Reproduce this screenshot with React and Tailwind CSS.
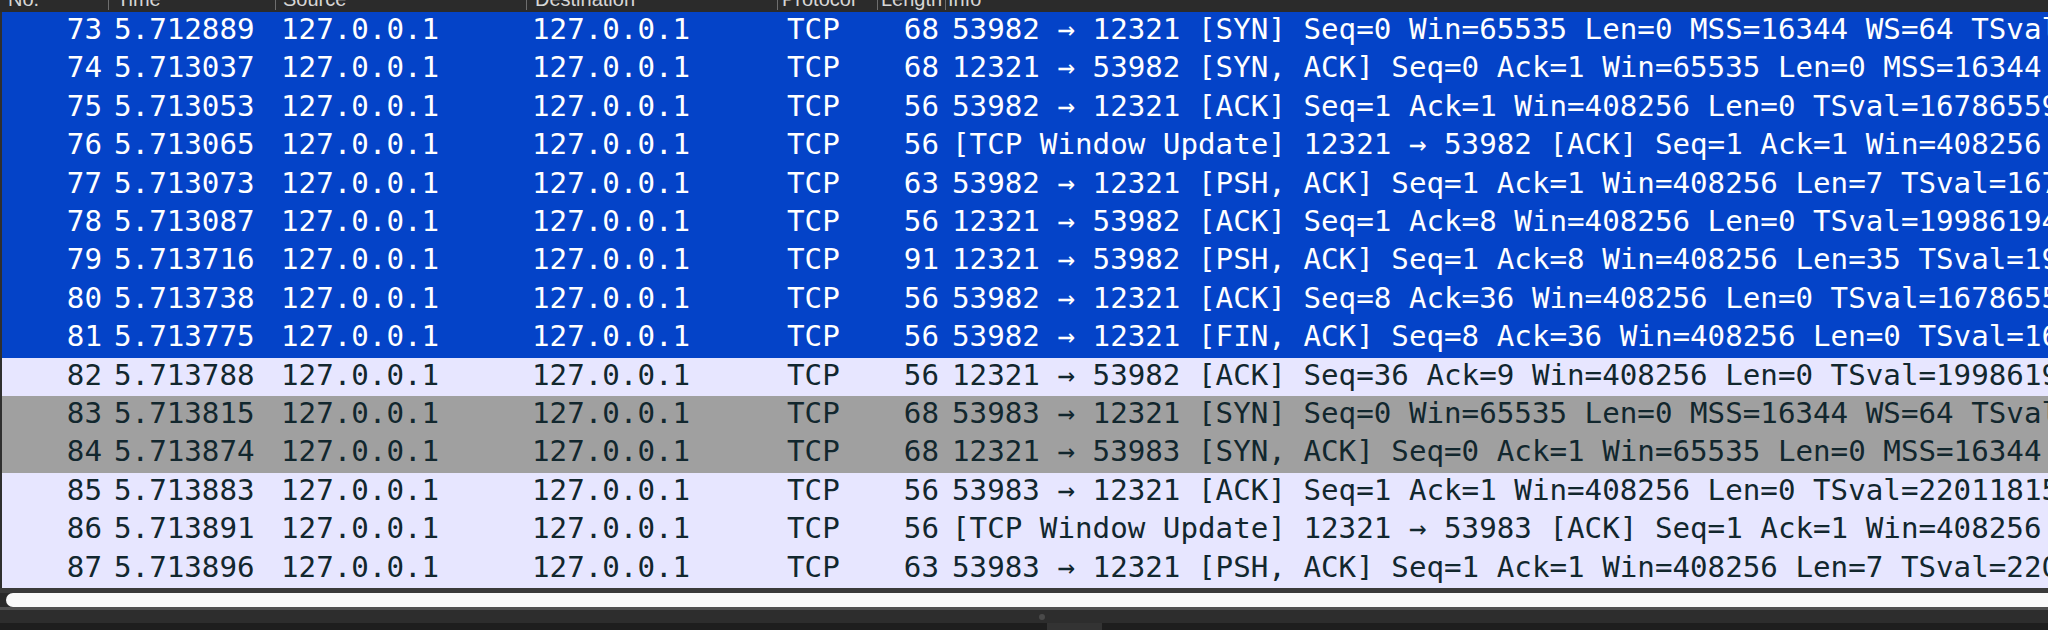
import React from "react";

const cols = [
  { key: "no", label: "No.", head: "pl-[6px]", cell: "justify-end pr-[6px]" },
  { key: "time", label: "Time", head: "pl-[8px]", cell: "pl-[6px]" },
  { key: "src", label: "Source", head: "pl-[7px]", cell: "pl-[6px]" },
  { key: "dst", label: "Destination", head: "pl-[8px]", cell: "pl-[6px]" },
  { key: "proto", label: "Protocol", head: "pl-[4px]", cell: "pl-[10px]" },
  { key: "len", label: "Length", head: "pl-[3px]", cell: "justify-end pr-[6px]" },
  { key: "info", label: "Info", head: "pl-[2px]", cell: "pl-[7px]" },
];

const packets = [
  [73, "5.712889", 68, "53982 → 12321 [SYN] Seq=0 Win=65535 Len=0 MSS=16344 WS=64 TSval=1678655904 TSecr=0 SACK_PERM", "sel"],
  [74, "5.713037", 68, "12321 → 53982 [SYN, ACK] Seq=0 Ack=1 Win=65535 Len=0 MSS=16344 WS=64 TSval=1998619420", "sel"],
  [75, "5.713053", 56, "53982 → 12321 [ACK] Seq=1 Ack=1 Win=408256 Len=0 TSval=1678655904 TSecr=1998619420", "sel"],
  [76, "5.713065", 56, "[TCP Window Update] 12321 → 53982 [ACK] Seq=1 Ack=1 Win=408256 Len=0 TSval=1998619420", "sel"],
  [77, "5.713073", 63, "53982 → 12321 [PSH, ACK] Seq=1 Ack=1 Win=408256 Len=7 TSval=1678655904 TSecr=1998619420", "sel"],
  [78, "5.713087", 56, "12321 → 53982 [ACK] Seq=1 Ack=8 Win=408256 Len=0 TSval=1998619420 TSecr=1678655904", "sel"],
  [79, "5.713716", 91, "12321 → 53982 [PSH, ACK] Seq=1 Ack=8 Win=408256 Len=35 TSval=1998619421 TSecr=1678655904", "sel"],
  [80, "5.713738", 56, "53982 → 12321 [ACK] Seq=8 Ack=36 Win=408256 Len=0 TSval=1678655905 TSecr=1998619421", "sel"],
  [81, "5.713775", 56, "53982 → 12321 [FIN, ACK] Seq=8 Ack=36 Win=408256 Len=0 TSval=1678655905 TSecr=1998619421", "sel"],
  [82, "5.713788", 56, "12321 → 53982 [ACK] Seq=36 Ack=9 Win=408256 Len=0 TSval=1998619421 TSecr=1678655905", "tcp"],
  [83, "5.713815", 68, "53983 → 12321 [SYN] Seq=0 Win=65535 Len=0 MSS=16344 WS=64 TSval=2201181530 TSecr=0", "syn"],
  [84, "5.713874", 68, "12321 → 53983 [SYN, ACK] Seq=0 Ack=1 Win=65535 Len=0 MSS=16344 WS=64 TSval=3110241806", "syn"],
  [85, "5.713883", 56, "53983 → 12321 [ACK] Seq=1 Ack=1 Win=408256 Len=0 TSval=2201181530 TSecr=3110241806", "tcp"],
  [86, "5.713891", 56, "[TCP Window Update] 12321 → 53983 [ACK] Seq=1 Ack=1 Win=408256 Len=0 TSval=3110241806", "tcp"],
  [87, "5.713896", 63, "53983 → 12321 [PSH, ACK] Seq=1 Ack=1 Win=408256 Len=7 TSval=2201181530 TSecr=3110241806", "tcp"],
];

const rowStyle = {
  sel: "bg-[#0443c8] text-white",
  tcp: "bg-[#e7e6ff] text-[#12272e]",
  syn: "bg-[#a0a0a0] text-[#12272e]",
};

const grid = "grid grid-cols-[106px_167px_251px_251px_100px_68px_1fr]";

const PacketRow = ({ p }) => {
  const [no, time, len, info, kind] = p;
  const values = [no, time, "127.0.0.1", "127.0.0.1", "TCP", len, info];
  return (
    <div className={`${grid} h-[38.42px] ${rowStyle[kind]}`}>
      {values.map((v, i) => (
        <div
          key={cols[i].key}
          className={`flex items-start overflow-hidden whitespace-pre leading-[35px] ${cols[i].cell}`}
        >
          {v}
        </div>
      ))}
    </div>
  );
};

export default function App() {
  return (
    <div className="w-[2048px] h-[630px] overflow-hidden flex flex-col bg-[#2b2b2b]">
      {/* column header, scrolled mostly out of view */}
      <div className={`${grid} h-[12px] shrink-0 bg-[#2b2b2b] pl-[2px] font-['Liberation_Sans',sans-serif] text-[20px] text-[#d6d6d6]`}>
        {cols.map((c, i) => (
          <div
            key={c.key}
            className={`h-[10px] whitespace-nowrap ${i > 0 ? "border-l border-[#6e6e6e]" : ""} ${c.head}`}
          >
            <div className="-mt-[11.6px] leading-[22px]">{c.label}</div>
          </div>
        ))}
      </div>

      {/* packet list */}
      <div className="shrink-0 border-l-2 border-[#2f2f2f] font-['DejaVu_Sans_Mono',monospace] text-[29.2px]">
        {packets.map((p) => (
          <PacketRow key={p[0]} p={p} />
        ))}
      </div>

      {/* horizontal scrollbar */}
      <div className="h-[5px] shrink-0 bg-[#3a3a3a]" />
      <div className="h-[14px] shrink-0 bg-[#2a2a2a] pl-[6px]">
        <div className="h-full rounded-l-full bg-[#fafafa]" />
      </div>
      <div className="h-[3px] shrink-0 bg-[#505050]" />

      {/* splitter */}
      <div className="h-[13px] shrink-0 bg-[#2d2d2d] flex items-center pl-[1039px]">
        <div className="w-[6px] h-[6px] rounded-full bg-[#4a4a4a]" />
      </div>
      <div className="flex-1 bg-[#1e1e1e] pl-[1047px]">
        <div className="w-[55px] h-full bg-[#333333]" />
      </div>
    </div>
  );
}
